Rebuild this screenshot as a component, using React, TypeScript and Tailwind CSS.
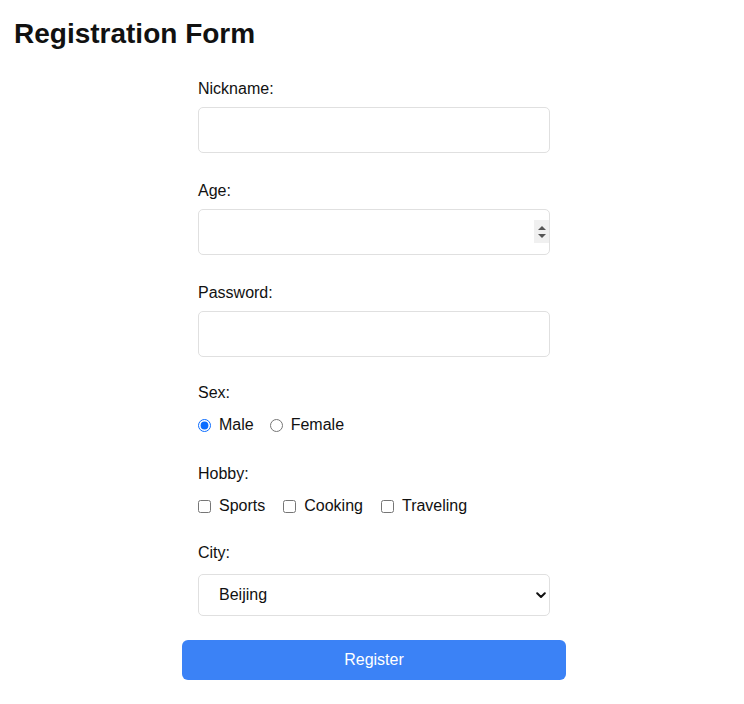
import { useState } from 'react'

export default function App() {
  const [sex, setSex] = useState('male')

  return (
    <div className="min-h-screen bg-white text-[#111] font-['Liberation_Sans',Arial,sans-serif]">
      <h1 className="pl-[14px] pt-5 text-[28px] leading-[28px] font-bold">Registration Form</h1>

      <div className="flex justify-center pl-1">
        <form className="w-[384px] mt-[29px]" onSubmit={e => e.preventDefault()}>
          <div className="px-4">
            {/* Nickname */}
            <div className="mb-[26px]">
              <label className="block text-base leading-6 mb-1.5">Nickname:</label>
              <input type="text" className="block w-full h-[46px] border border-[#e0e0e0] rounded-[5px] px-3 text-base outline-none" />
            </div>

            {/* Age */}
            <div className="mb-[26px]">
              <label className="block text-base leading-6 mb-1.5">Age:</label>
              <div className="relative">
                <input
                  type="number"
                  className="block w-full h-[46px] border border-[#e0e0e0] rounded-[5px] px-3 text-base outline-none [appearance:textfield] [&::-webkit-inner-spin-button]:appearance-none [&::-webkit-outer-spin-button]:appearance-none"
                />
                <div className="absolute right-[1px] top-[11px] w-[15px] h-[23px] bg-[#f0f0f0] flex flex-col items-center justify-center gap-[4px] pointer-events-none">
                  <svg width="8" height="4" viewBox="0 0 8 4"><path d="M0 4 L4 0 L8 4 Z" fill="#555" /></svg>
                  <svg width="8" height="4" viewBox="0 0 8 4"><path d="M0 0 L8 0 L4 4 Z" fill="#555" /></svg>
                </div>
              </div>
            </div>

            {/* Password */}
            <div className="mb-6">
              <label className="block text-base leading-6 mb-1.5">Password:</label>
              <input type="password" className="block w-full h-[46px] border border-[#e0e0e0] rounded-[5px] px-3 text-base outline-none" />
            </div>

            {/* Sex */}
            <div className="mb-[25px]">
              <div className="text-base leading-6 mb-2">Sex:</div>
              <div className="flex items-center h-6 text-base">
                <label className="flex items-center mr-4">
                  <input type="radio" name="sex" checked={sex === 'male'} onChange={() => setSex('male')} className="w-[13px] h-[13px] m-0 accent-[#0a6cff]" />
                  <span className="ml-2">Male</span>
                </label>
                <label className="flex items-center">
                  <input type="radio" name="sex" checked={sex === 'female'} onChange={() => setSex('female')} className="w-[13px] h-[13px] m-0 accent-[#0a6cff]" />
                  <span className="ml-2">Female</span>
                </label>
              </div>
            </div>

            {/* Hobby */}
            <div className="mb-[23px]">
              <div className="text-base leading-6 mb-2">Hobby:</div>
              <div className="flex items-center h-6 text-base">
                {['Sports', 'Cooking', 'Traveling'].map(h => (
                  <label key={h} className="flex items-center mr-[18px]">
                    <input type="checkbox" className="w-[13px] h-[13px] m-0" />
                    <span className="ml-2">{h}</span>
                  </label>
                ))}
              </div>
            </div>

            {/* City */}
            <div className="mb-6">
              <label className="block text-base leading-6 mb-[9px]">City:</label>
              <div className="relative">
                <select className="block w-full h-[42px] appearance-none border border-[#e0e0e0] rounded-[5px] bg-white pl-5 pr-8 text-base text-[#111] outline-none">
                  <option>Beijing</option>
                  <option>Shanghai</option>
                  <option>Guangzhou</option>
                  <option>Shenzhen</option>
                </select>
                <svg className="absolute right-[4px] top-[18px] pointer-events-none" width="10" height="7" viewBox="0 0 10 7">
                  <path d="M1.2 1.2 L5 5 L8.8 1.2" fill="none" stroke="#111" strokeWidth="2" strokeLinecap="round" strokeLinejoin="round" />
                </svg>
              </div>
            </div>
          </div>

          <button type="submit" className="block w-full h-10 bg-[#3b82f6] text-white text-base rounded-md">
            Register
          </button>
        </form>
      </div>
    </div>
  )
}
